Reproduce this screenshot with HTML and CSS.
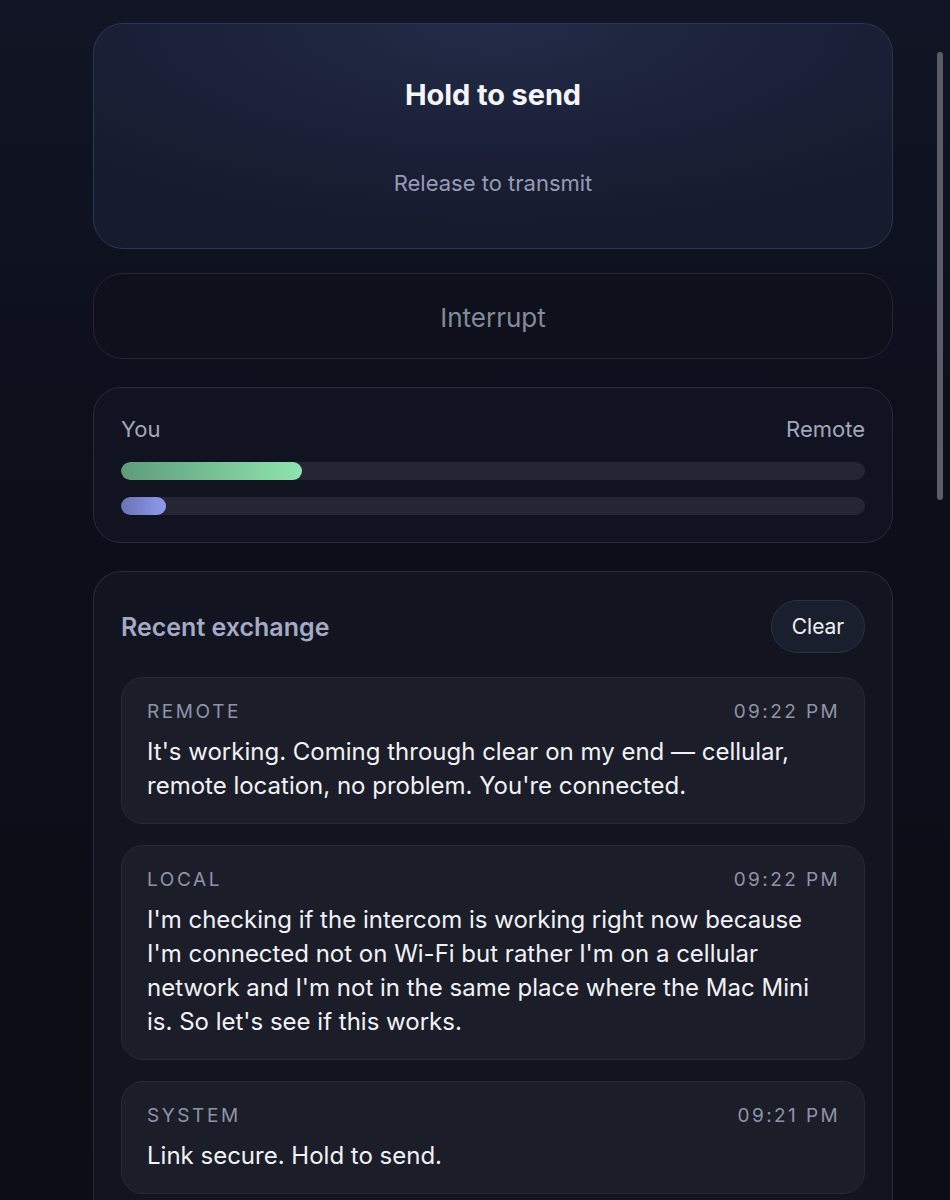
FILE: index.html
```html
<!DOCTYPE html>
<html lang="en">
<head>
<meta charset="utf-8">
<title>Intercom</title>
<link rel="stylesheet" href="styles.css">
</head>
<body>
<main class="page">
  <section class="hold">
    <div class="hold-title">Hold to send</div>
    <div class="hold-sub">Release to transmit</div>
  </section>

  <button class="interrupt">Interrupt</button>

  <section class="meters">
    <div class="meter-labels"><span>You</span><span>Remote</span></div>
    <div class="track"><div class="fill fill-you" style="width:24.3%"></div></div>
    <div class="track"><div class="fill fill-remote" style="width:6%"></div></div>
  </section>

  <section class="log">
    <div class="log-head">
      <h2 class="log-title">Recent exchange</h2>
      <button class="clear">Clear</button>
    </div>
    <div class="msgs">
      <article class="msg">
        <div class="msg-meta"><span>REMOTE</span><span class="time">09:22 PM</span></div>
        <p class="msg-body">It's working. Coming through clear on my end — cellular, remote location, no problem. You're connected.</p>
      </article>
      <article class="msg">
        <div class="msg-meta"><span>LOCAL</span><span class="time">09:22 PM</span></div>
        <p class="msg-body">I'm checking if the intercom is working right now because I'm connected not on Wi-Fi but rather I'm on a cellular network and I'm not in the same place where the Mac Mini is. So let's see if this works.</p>
      </article>
      <article class="msg">
        <div class="msg-meta"><span>SYSTEM</span><span class="time">09:21 PM</span></div>
        <p class="msg-body">Link secure. Hold to send.</p>
      </article>
    </div>
  </section>
</main>
<div class="scroll-indicator"></div>
</body>
</html>
```

FILE: styles.css
```css
* { box-sizing: border-box; }
html, body { margin: 0; padding: 0; }
body {
  background: linear-gradient(180deg, #111525 0%, #0c0f19 40%, #0b0e17 100%);
  min-height: 1200px;
  font-family: Inter, "Noto Sans", sans-serif;
  color: #f2f3f7;
  overflow: hidden;
}
.page {
  width: 800px;
  margin-left: 93px;
  padding-top: 23px;
  display: flex;
  flex-direction: column;
}
.hold {
  height: 226px;
  border: 1px solid #2d3552;
  border-radius: 30px;
  background: radial-gradient(ellipse 70% 90% at 50% 0%, #232b47 0%, #1b2139 55%, #171b2e 100%);
  display: flex;
  flex-direction: column;
  align-items: center;
  padding-top: 54px;
}
.hold-title {
  font-size: 29px;
  font-weight: 700;
  line-height: 34px;
  color: #f4f5fa;
  letter-spacing: -0.1px;
}
.hold-sub {
  margin-top: 58px;
  font-size: 22px;
  line-height: 26px;
  color: #959bb3;
}
.interrupt {
  margin-top: 24px;
  height: 86px;
  border: 1px solid #2b2232;
  border-radius: 30px;
  background: #0e111b;
  font-family: inherit;
  font-size: 26px;
  color: #858a99;
  padding: 2px 0 0 0;
}
.meters {
  margin-top: 28px;
  height: 156px;
  border: 1px solid #272c3b;
  border-radius: 28px;
  background: #111420;
  padding: 28px 27px 0 27px;
}
.meter-labels {
  display: flex;
  justify-content: space-between;
  font-size: 22px;
  line-height: 26px;
  color: #a2a8bc;
}
.track {
  margin-top: 20px;
  height: 18px;
  border-radius: 9px;
  background: #242733;
  overflow: hidden;
}
.track + .track { margin-top: 17px; }
.fill { height: 100%; border-radius: 9px; }
.fill-you { background: linear-gradient(90deg, #5e9c7c 0%, #8ee5ad 100%); }
.fill-remote { background: linear-gradient(90deg, #6a73b2 0%, #8f9af0 100%); }
.log {
  margin-top: 28px;
  border: 1px solid #272c3b;
  border-bottom: none;
  border-radius: 28px 28px 0 0;
  background: #121520;
  padding: 28px 27px 40px 27px;
}
.log-head {
  display: flex;
  justify-content: space-between;
  align-items: center;
}
.log-title {
  margin: 0;
  font-size: 25px;
  font-weight: 600;
  color: #a4aac4;
}
.clear {
  width: 94px;
  height: 53px;
  border-radius: 27px;
  border: 1px solid #2b3245;
  background: #1a1f2e;
  color: #eef0f5;
  font-family: inherit;
  font-size: 21px;
}
.msgs {
  margin-top: 24px;
  display: flex;
  flex-direction: column;
  gap: 21px;
}
.msg {
  border: 1px solid #262a37;
  border-radius: 22px;
  background: #1b1e29;
  padding: 23px 26px 20px 25px;
}
.msg-meta {
  display: flex;
  justify-content: space-between;
  font-size: 19px;
  line-height: 22px;
  letter-spacing: 2.6px;
  color: #8e94a7;
}
.msg-meta .time { letter-spacing: 2.4px; margin-right: -2px; }
.msg-body {
  margin: 12px 0 0 0;
  font-size: 24px;
  line-height: 34px;
  color: #f1f2f6;
}
.scroll-indicator {
  position: fixed;
  left: 937px;
  top: 52px;
  width: 6px;
  height: 448px;
  border-radius: 3px;
  background: #5a5d68;
}
```
